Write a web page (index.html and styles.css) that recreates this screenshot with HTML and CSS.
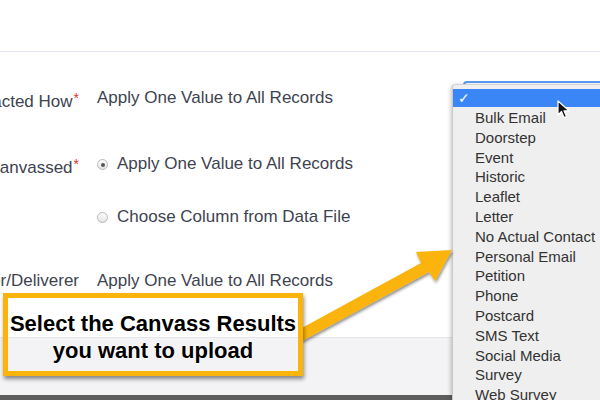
FILE: index.html
```html
<!DOCTYPE html>
<html lang="en">
<head>
  <meta charset="UTF-8" />
  <title>Canvass Upload</title>
  <link rel="stylesheet" href="styles.css">
</head>
<body>

<!-- Page header strip -->
<div class="top"></div>

<!-- Field mapping form -->
<div class="form">
  <div class="field first">
    <div class="label"><span>Contacted How<b class="req">*</b></span></div>
    <div class="value">Apply One Value to All Records</div>
  </div>

  <div class="field group">
    <div class="label"><span>Date Canvassed<b class="req">*</b></span></div>
    <div class="options">
      <div class="option"><i class="radio on"></i>Apply One Value to All Records</div>
      <div class="option"><i class="radio"></i>Choose Column from Data File</div>
    </div>
  </div>

  <div class="field">
    <div class="label"><span>Canvasser/Deliverer</span></div>
    <div class="value">Apply One Value to All Records</div>
  </div>
</div>

<div class="footer"></div>
<div class="dark"></div>

<!-- Open select menu -->
<div class="select-box"></div>
<ul class="menu">
  <li class="selected"><span class="check">&#10003;</span></li>
  <li>Bulk Email</li>
  <li>Doorstep</li>
  <li>Event</li>
  <li>Historic</li>
  <li>Leaflet</li>
  <li>Letter</li>
  <li>No Actual Contact</li>
  <li>Personal Email</li>
  <li>Petition</li>
  <li>Phone</li>
  <li>Postcard</li>
  <li>SMS Text</li>
  <li>Social Media</li>
  <li>Survey</li>
  <li>Web Survey</li>
</ul>

<!-- Mouse pointer -->
<svg class="cursor" width="14" height="20" viewBox="0 0 14 20">
  <path d="M1 1 L1 15 L4.5 11.5 L7 17.5 L9.5 16.5 L7 10.8 L12 10.8 Z" fill="#111" stroke="#fff" stroke-width="1.2" stroke-linejoin="round"/>
</svg>

<!-- Annotation -->
<svg class="arrow" width="600" height="400" viewBox="0 0 600 400">
  <defs>
    <filter id="sh" x="-10%" y="-10%" width="130%" height="130%">
      <feDropShadow dx="1" dy="2" stdDeviation="1.5" flood-color="#000" flood-opacity="0.45"/>
    </filter>
  </defs>
  <polygon points="300,329 421,263 416,252 452,250 435,281 429,272 302,341" fill="#fbb40c" filter="url(#sh)"/>
</svg>

<div class="callout">Select the Canvass Results<br>you want to upload</div>

</body>
</html>
```

FILE: styles.css
```css
* {
  margin: 0;
  padding: 0;
  box-sizing: border-box;
}

body {
  width: 600px;
  height: 400px;
  overflow: hidden;
  position: relative;
  background: #fff;
  font-family: "Liberation Sans", Arial, sans-serif;
  color: #3e4350;
  font-size: 17px;
}

.top {
  height: 52px;
  border-bottom: 1px solid #dfe4ea;
}

.form {
  padding-top: 36px;
  height: 285px;
}

.field {
  display: flex;
  line-height: 20px;
  margin-bottom: 44px;
}

.field.first {
  margin-bottom: 42px;
}

.label {
  width: 79px;
  display: flex;
  justify-content: flex-end;
  overflow: hidden;
  white-space: nowrap;
  flex-shrink: 0;
}

.req {
  color: #d4313a;
  font-weight: normal;
  font-size: 14px;
  vertical-align: 4px;
  margin-left: 1px;
}

.value {
  margin-left: 18px;
  white-space: nowrap;
}

.options {
  margin-left: 18px;
  display: flex;
  flex-direction: column;
  gap: 33px;
}

.option {
  display: flex;
  align-items: center;
  white-space: nowrap;
}

.radio {
  width: 11px;
  height: 11px;
  border-radius: 50%;
  border: 1px solid #b9b9b9;
  background: linear-gradient(#fdfdfd, #e4e4e4);
  margin-right: 9px;
  position: relative;
}

.radio.on::after {
  content: "";
  position: absolute;
  left: 3px;
  top: 3px;
  width: 4px;
  height: 4px;
  border-radius: 50%;
  background: #555;
}

.footer {
  height: 58px;
  background: #f3f3f5;
  border-top: 1px solid #e6e6ea;
}

.dark {
  height: 10px;
  background: #5c5c5c;
}

.select-box {
  position: absolute;
  left: 463px;
  top: 81px;
  width: 160px;
  height: 20px;
  border: 2px solid #5b9bf5;
  border-radius: 4px;
}

.menu {
  position: absolute;
  left: 452px;
  top: 84px;
  width: 170px;
  height: 330px;
  list-style: none;
  background: #efefef;
  border-left: 1px solid #c9c9c9;
  border-top: 1px solid #d4d4d4;
  border-radius: 4px 0 0 0;
  box-shadow: -1px 1px 4px rgba(0, 0, 0, 0.25);
  padding-top: 4px;
  font-family: "Liberation Sans", Arial, sans-serif;
  font-size: 15px;
  color: #333;
}

.menu li {
  height: 19.8px;
  line-height: 19.8px;
  padding-left: 22px;
  white-space: nowrap;
}

.menu li.selected {
  background: #3b86f7;
  height: 18px;
  line-height: 18px;
  padding-left: 5px;
  margin-bottom: 1px;
}

.check {
  color: #fff;
  font-family: "DejaVu Sans", sans-serif;
  font-size: 14px;
  font-weight: bold;
}

.cursor {
  position: absolute;
  left: 557px;
  top: 100px;
}

.arrow {
  position: absolute;
  left: 0;
  top: 0;
}

.callout {
  position: absolute;
  left: 3px;
  top: 293px;
  width: 300px;
  height: 83px;
  border: 5px solid #fbb40c;
  box-shadow: 1px 3px 4px rgba(0, 0, 0, 0.45);
  text-align: center;
  font-family: "Liberation Sans", Arial, sans-serif;
  font-weight: bold;
  font-size: 22px;
  line-height: 27px;
  color: #000;
  padding-top: 12px;
  text-shadow: 0 0 2px #fff, 0 0 2px #fff;
}
```
